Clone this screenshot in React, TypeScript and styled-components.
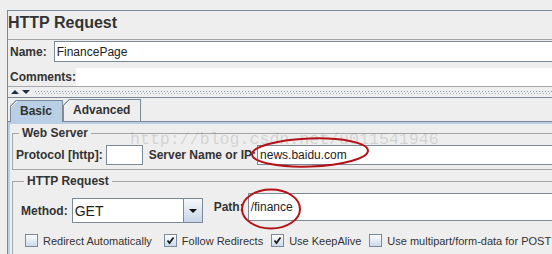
import React from "react";
import styled, { createGlobalStyle } from "styled-components";

const GlobalStyle = createGlobalStyle`
  html, body {
    margin: 0;
    padding: 0;
    background: #eeeeee;
    overflow: hidden;
  }
  body {
    font-family: "Liberation Sans", Arial, sans-serif;
    color: #333333;
  }
`;

const Screen = styled.div`
  position: relative;
  width: 552px;
  height: 254px;
  overflow: hidden;
  padding: 10px 0 0 7px;
  box-sizing: border-box;
`;

const Frame = styled.div`
  width: 640px;
  border-top: 1px solid #7a8a99;
  border-left: 1px solid #7a8a99;
`;

const Title = styled.div`
  font-size: 16px;
  font-weight: bold;
  line-height: 20px;
  padding: 2px 0 6px 0;
`;

const NameBox = styled.div`
  border-top: 1px solid #a3a3a3;
`;

const Row = styled.div<{ $gap?: number; $top?: number }>`
  display: flex;
  align-items: center;
  padding-left: 2px;
  gap: ${(p) => p.$gap ?? 6}px;
  margin-top: ${(p) => p.$top ?? 0}px;
`;

const CommentsRow = styled(Row)`
  height: 18px;
  align-items: stretch;
  border-bottom: 1px solid #a8a8a8;
`;

const Label = styled.span<{ $left?: number }>`
  font-size: 12px;
  font-weight: bold;
  white-space: nowrap;
  display: flex;
  align-items: center;
  margin-left: ${(p) => p.$left ?? 0}px;
`;

const TextField = styled.div<{ $h?: number; $w?: number; $left?: number }>`
  box-sizing: border-box;
  height: ${(p) => p.$h ?? 21}px;
  ${(p) => (p.$w ? `width: ${p.$w}px;` : "flex: 1;")}
  margin-left: ${(p) => p.$left ?? 0}px;
  border: 1px solid #7a8a99;
  background: #ffffff;
  font-size: 12px;
  padding-left: 2px;
  display: flex;
  align-items: center;
  color: #222;
`;

const TextArea = styled.div`
  flex: 1;
  background: #ffffff;
`;

const Divider = styled.div`
  height: 10px;
  display: flex;
  align-items: center;
  padding-left: 3px;
  gap: 3px;
`;

const Arrow = styled.span<{ $down?: boolean }>`
  width: 0;
  height: 0;
  border-left: 4px solid transparent;
  border-right: 4px solid transparent;
  ${(p) =>
    p.$down
      ? "border-top: 4px solid #1c2c44;"
      : "border-bottom: 4px solid #1c2c44;"}
`;

const Grip = styled.svg`
  display: block;
  flex: 1;
  height: 3px;
  margin-left: 2px;
`;

const TabsArea = styled.div`
  border-top: 1px solid #7a8a99;
`;

const TabStrip = styled.div`
  height: 23px;
  display: flex;
  align-items: flex-end;
  padding-left: 2px;
`;

const Tab = styled.div<{ $active?: boolean }>`
  position: relative;
  z-index: 1;
  box-sizing: border-box;
  height: 22px;
  margin-bottom: ${(p) => (p.$active ? -1 : 0)}px;
  padding: 0 10px 2px 9px;
  display: flex;
  align-items: center;
  font-size: 12px;
  font-weight: bold;
  border: 1px solid #7a8a99;
  border-bottom: none;
  clip-path: polygon(6px 0, 100% 0, 100% 100%, 0 100%, 0 6px);
  background:
    linear-gradient(135deg, transparent 0 4px, #7a8a99 4px 5.2px, ${(p) => (p.$active ? "#ffffff" : "transparent")} 5.2px 6px, transparent 6px) 0 0 / 8px 8px no-repeat border-box,
    ${(p) => (p.$active ? "#b8cfe5" : "#eeeeee")};
`;

const TabPanel = styled.div`
  border-top: 1px solid #7a8a99;
  box-shadow: inset 0 2px 0 #b8cfe5, inset 2px 0 0 #b8cfe5;
  padding: 4px 0 0 4px;
`;

const Group = styled.fieldset<{ $pad: string; $top?: number }>`
  margin: ${(p) => p.$top ?? 0}px 0 0 0;
  min-width: 0;
  border: 1px solid #a5a5a5;
  border-right: none;
  padding: ${(p) => p.$pad};
`;

const Legend = styled.legend`
  font-size: 12px;
  font-weight: bold;
  line-height: 14px;
  padding: 0 3px;
  margin-left: 3px;
`;

const ServerRow = styled.div`
  display: flex;
  align-items: center;
  height: 20px;
`;

const RequestRow = styled.div`
  display: flex;
  align-items: flex-start;
`;

const Pair = styled.div<{ $h: number; $top?: number; $left?: number; $grow?: boolean }>`
  display: flex;
  align-items: center;
  gap: 4px;
  height: ${(p) => p.$h}px;
  margin-top: ${(p) => p.$top ?? 0}px;
  margin-left: ${(p) => p.$left ?? 0}px;
  flex: ${(p) => (p.$grow ? 1 : "none")};
`;

const Combo = styled.div`
  box-sizing: border-box;
  display: flex;
  width: 131px;
  height: 25px;
  border: 1px solid #7a8a99;
  background: #ffffff;
`;

const ComboValue = styled.div`
  flex: 1;
  display: flex;
  align-items: center;
  padding-left: 2px;
  font-size: 14px;
  color: #222;
`;

const ComboButton = styled.div`
  width: 18px;
  border-left: 1px solid #7a8a99;
  background: linear-gradient(#f6f8fb, #c6d6e8);
  display: flex;
  align-items: center;
  justify-content: center;
`;

const DownTriangle = styled.span`
  width: 0;
  height: 0;
  border-left: 4px solid transparent;
  border-right: 4px solid transparent;
  border-top: 4px solid #111;
`;

const Checks = styled.div`
  display: flex;
  align-items: center;
  margin: 11px 0 0 4px;
`;

const Check = styled.label<{ $left?: number }>`
  display: flex;
  align-items: center;
  gap: 5px;
  font-size: 11px;
  white-space: nowrap;
  margin-left: ${(p) => p.$left ?? 0}px;
`;

const Box = styled.span`
  box-sizing: border-box;
  width: 13px;
  height: 13px;
  border: 1px solid #7a8a99;
  background: linear-gradient(#fdfeff, #ccdaea);
  display: flex;
  align-items: center;
  justify-content: center;
`;

const Watermark = styled.div`
  position: absolute;
  left: 130px;
  top: 131px;
  font-family: "Liberation Mono", "Courier New", monospace;
  font-size: 16.6px;
  line-height: 17px;
  color: rgba(140, 140, 140, 0.28);
  white-space: nowrap;
  pointer-events: none;
`;

const Marks = styled.svg`
  position: absolute;
  left: 0;
  top: 0;
  pointer-events: none;
`;

const CheckBox: React.FC<{ checked?: boolean; label: string; left?: number }> = ({
  checked,
  label,
  left,
}) => (
  <Check $left={left}>
    <Box>
      {checked && (
        <svg width="9" height="9" viewBox="0 0 9 9">
          <path d="M1.5 4.5 L3.5 7 L7.5 1.5" fill="none" stroke="#1a1a1a" strokeWidth="1.8" />
        </svg>
      )}
    </Box>
    {label}
  </Check>
);

const App: React.FC = () => {
  return (
    <Screen>
      <GlobalStyle />
      <Frame>
        <Title>HTTP Request</Title>
        <NameBox>
          <Row $gap={7} $top={1}>
            <Label>Name:</Label>
            <TextField>FinancePage</TextField>
          </Row>
          <CommentsRow $gap={0} $top={6}>
            <Label>Comments:</Label>
            <TextArea />
          </CommentsRow>
        </NameBox>
        <Divider>
          <Arrow />
          <Arrow $down />
          <Grip height="3">
            <defs>
              <pattern id="grip" width="3" height="3" patternUnits="userSpaceOnUse">
                <rect x="0" y="0" width="1" height="1" fill="#8494a4" />
                <rect x="1" y="2" width="1" height="1" fill="#a0acb8" />
              </pattern>
            </defs>
            <rect width="100%" height="3" fill="url(#grip)" />
          </Grip>
        </Divider>
        <TabsArea>
          <TabStrip>
            <Tab $active>Basic</Tab>
            <Tab>Advanced</Tab>
          </TabStrip>
          <TabPanel>
            <Group $pad="5px 0 4px 3px">
              <Legend>Web Server</Legend>
              <ServerRow>
                <Label>Protocol [http]:</Label>
                <TextField $h={20} $w={37} $left={3} />
                <Label $left={6}>Server Name or IP:</Label>
                <TextField $h={20} $left={1}>news.baidu.com</TextField>
              </ServerRow>
            </Group>
            <Group $pad="5px 0 8px 8px" $top={4}>
              <Legend>HTTP Request</Legend>
              <RequestRow>
                <Pair $h={25} $top={5}>
                  <Label>Method:</Label>
                  <Combo>
                    <ComboValue>GET</ComboValue>
                    <ComboButton>
                      <DownTriangle />
                    </ComboButton>
                  </Combo>
                </Pair>
                <Pair $h={28} $left={11} $grow>
                  <Label>Path:</Label>
                  <TextField $h={28}>/finance</TextField>
                </Pair>
              </RequestRow>
              <Checks>
                <CheckBox label="Redirect Automatically" />
                <CheckBox checked label="Follow Redirects" left={12} />
                <CheckBox checked label="Use KeepAlive" left={8} />
                <CheckBox label="Use multipart/form-data for POST" left={8} />
              </Checks>
            </Group>
          </TabPanel>
        </TabsArea>
      </Frame>
      <Watermark>http://blog.csdn.net/u011541946</Watermark>
      <Marks width="552" height="254">
        <ellipse cx="310" cy="152.5" rx="58" ry="14" fill="none" stroke="#b51218" strokeWidth="2" transform="rotate(-2 310 152.5)" />
        <ellipse cx="271" cy="209" rx="29" ry="19.5" fill="none" stroke="#b51218" strokeWidth="2" />
      </Marks>
    </Screen>
  );
};

export default App;
